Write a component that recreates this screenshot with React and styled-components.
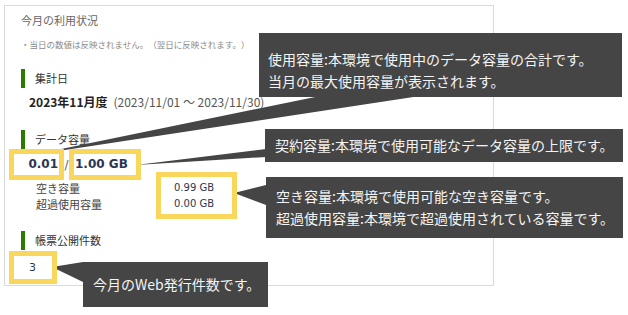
import styled, { createGlobalStyle } from 'styled-components'

const GlobalStyle = createGlobalStyle`
  html, body {
    margin: 0;
    padding: 0;
    background: #fff;
  }
  body {
    font-family: 'Noto Sans CJK JP', 'Noto Sans', sans-serif;
    text-spacing-trim: space-all;
  }
`

const YELLOW = '#f9d65c'
const DARK = '#454545'

const App = () => (
  <Page>
    <GlobalStyle />
    <Panel>
      <Title>今月の利用状況</Title>
      <Note>・当日の数値は反映されません。（翌日に反映されます。）</Note>

      <SectionHead $top={17}>集計日</SectionHead>
      <DateLine>
        <strong>2023年11月度</strong>
        <Range>(2023/11/01 ～ 2023/11/30)</Range>
      </DateLine>

      <SectionHead $top={19}>データ容量</SectionHead>
      <ValueRow>
        <Highlight $w={55} $h={31} $align="right" $pad="0 1px 0 0">
          <Big>0.01</Big>
        </Highlight>
        <Slash>/</Slash>
        <Highlight $w={72} $h={31} $pad="0 0 0 1px">
          <Big>1.00 GB</Big>
        </Highlight>
      </ValueRow>
      <Detail>
        <Labels>
          <span>空き容量</span>
          <span>超過使用容量</span>
        </Labels>
        <Highlight $w={81} $h={47} $pad="3px 0 0 13px" $lift={8}>
          <Small>0.99 GB</Small>
          <Small>0.00 GB</Small>
        </Highlight>
      </Detail>

      <SectionHead $top={12}>帳票公開件数</SectionHead>
      <Highlight $w={48} $h={33} $pad="0 0 0 15px" $top={1}>
        <Count>3</Count>
      </Highlight>
    </Panel>

    <Pointers width="628" height="315" viewBox="0 0 628 315">
      <polygon points="320,96 420,96 32,155" />
      <polygon points="266,149 266,157 136,165" />
      <polygon points="266,185 266,205 234,193" />
      <polygon points="83,262 83,282 52,267" />
    </Pointers>

    <Callout $top={33} $left={259} $w={363} $h={64} $pad="15px 0 0 9px">
      使用容量:本環境で使用中のデータ容量の合計です。
      <br />
      当月の最大使用容量が表示されます。
    </Callout>
    <Callout $top={129} $left={265} $w={358} $h={33} $pad="5px 0 0 10px">
      契約容量:本環境で使用可能なデータ容量の上限です。
    </Callout>
    <Callout $top={177} $left={266} $w={357} $h={61} $pad="8px 0 0 10px">
      空き容量:本環境で使用可能な空き容量です。
      <br />
      超過使用容量:本環境で超過使用されている容量です。
    </Callout>
    <Callout $top={262} $left={83} $w={185} $h={45} $pad="11px 0 0 10px">
      今月のWeb発行件数です。
    </Callout>
  </Page>
)

const Page = styled.div`
  position: relative;
  width: 628px;
  height: 315px;
  overflow: hidden;
  padding: 5px 0 0 4px;
  box-sizing: border-box;
`

const Panel = styled.section`
  box-sizing: border-box;
  width: 490px;
  height: 281px;
  border: 1px solid #dadada;
  padding: 4px 0 0 16px;
  display: flex;
  flex-direction: column;
  align-items: flex-start;
`

const Title = styled.h2`
  margin: 0;
  font-size: 11px;
  font-weight: normal;
  line-height: 20px;
  color: #666;
`

const Note = styled.p`
  margin: 6px 0 0;
  font-size: 8.5px;
  line-height: 16px;
  color: #8a8a8a;
`

const SectionHead = styled.h3`
  margin: ${({ $top }) => $top}px 0 0;
  height: 19px;
  border-left: 4px solid #2a7c00;
  padding-left: 10px;
  font-size: 11px;
  font-weight: normal;
  line-height: 19px;
  color: #333;
`

const DateLine = styled.div`
  margin-top: 5px;
  padding-left: 8px;
  font-size: 12px;
  line-height: 18px;
  color: #222;

  strong {
    font-weight: 700;
  }
`

const Range = styled.span`
  margin-left: 6px;
  color: #555;
`

const ValueRow = styled.div`
  display: flex;
  align-items: center;
  margin-left: -12px;
`

const Highlight = styled.div`
  position: relative;
  z-index: 2;
  box-sizing: border-box;
  width: ${({ $w }) => $w}px;
  height: ${({ $h }) => $h}px;
  margin-top: ${({ $top = 0, $lift = 0 }) => $top - $lift}px;
  margin-left: ${({ $top }) => ($top !== undefined ? '-12px' : '0')};
  border: 5px solid ${YELLOW};
  background: #fff;
  padding: ${({ $pad }) => $pad};
  text-align: ${({ $align = 'left' }) => $align};
  display: flex;
  flex-direction: column;
  align-items: ${({ $align }) => ($align === 'right' ? 'flex-end' : 'flex-start')};
  font-family: 'DejaVu Sans', Verdana, sans-serif;
  color: #2c3552;
`

const Big = styled.span`
  font-size: 12px;
  font-weight: 700;
  line-height: 21px;
`

const Slash = styled.span`
  width: 5px;
  text-align: center;
  font-family: 'DejaVu Sans', sans-serif;
  font-size: 12px;
  color: #666;
`

const Detail = styled.div`
  display: flex;
  align-items: flex-start;
`

const Labels = styled.div`
  width: 120px;
  margin-left: 15px;
  display: flex;
  flex-direction: column;
  font-size: 11px;
  line-height: 16px;
  color: #444;
`

const Small = styled.span`
  font-size: 10px;
  line-height: 16px;
`

const Count = styled.span`
  font-size: 11px;
  line-height: 23px;
`

const Pointers = styled.svg`
  position: absolute;
  top: 0;
  left: 0;
  z-index: 1;
  pointer-events: none;

  polygon {
    fill: ${DARK};
  }
`

const Callout = styled.div`
  position: absolute;
  z-index: 3;
  top: ${({ $top }) => $top}px;
  left: ${({ $left }) => $left}px;
  width: ${({ $w }) => $w}px;
  height: ${({ $h }) => $h}px;
  box-sizing: border-box;
  padding: ${({ $pad }) => $pad};
  background: ${DARK};
  color: #f4f4f4;
  font-size: 14px;
  line-height: 22px;
  white-space: nowrap;
`

export default App
